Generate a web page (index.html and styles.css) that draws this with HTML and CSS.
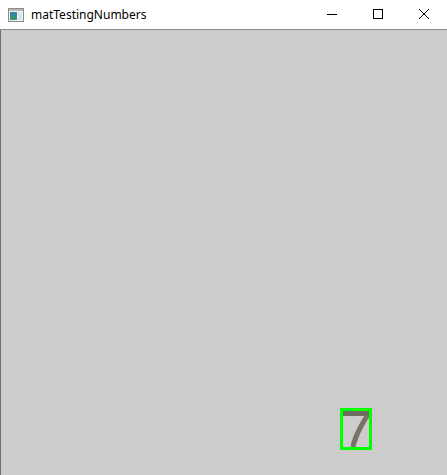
FILE: index.html
```html
<!DOCTYPE html>
<html>
<head>
<meta charset="utf-8">
<link rel="stylesheet" href="styles.css">
</head>
<body>
<div class="window">
  <div class="titlebar">
    <svg class="appicon" width="16" height="14" viewBox="0 0 16 14">
      <rect x="0.5" y="0.5" width="15" height="13" fill="#f4f4f4" stroke="#8a8a8a"/>
      <rect x="1" y="1" width="14" height="2" fill="#b8b8b8"/>
      <defs><linearGradient id="g" x1="0" y1="0" x2="0" y2="1"><stop offset="0" stop-color="#2f7fb0"/><stop offset="1" stop-color="#3c9a6a"/></linearGradient></defs>
      <rect x="2" y="4" width="7" height="8" fill="url(#g)"/>
      <rect x="10" y="4" width="4" height="8" fill="#d8e4ea"/>
    </svg>
    <span class="title">matTestingNumbers</span>
    <div class="controls">
      <svg class="btn" width="46" height="29" viewBox="0 0 46 29"><line x1="18" y1="14.5" x2="28" y2="14.5" stroke="#000" stroke-width="1"/></svg>
      <svg class="btn" width="46" height="29" viewBox="0 0 46 29"><rect x="18.5" y="9.5" width="9" height="9" fill="none" stroke="#000" stroke-width="1"/></svg>
      <svg class="btn" width="46" height="29" viewBox="0 0 46 29"><path d="M18 9 L28 19 M28 9 L18 19" stroke="#000" stroke-width="1"/></svg>
    </div>
  </div>
  <div class="canvas">
    <div class="detection">
      <svg class="digit" width="26" height="36" viewBox="0 0 26 36">
        <path d="M0 2.5 L26 2.5" stroke="#6f6a62" stroke-width="5" fill="none"/>
        <path d="M24.5 4 C20.5 11 16 18 13 26 S10.5 33 10 36" stroke="#77716a" stroke-width="5" fill="none"/>
      </svg>
    </div>
  </div>
</div>
</body>
</html>
```
FILE: styles.css
```css
html, body {
  margin: 0;
  padding: 0;
}
body {
  width: 447px;
  height: 475px;
  overflow: hidden;
  font-family: "Noto Sans", "Open Sans", "Liberation Sans", sans-serif;
}
.window {
  display: flex;
  flex-direction: column;
  width: 447px;
  height: 475px;
}
.titlebar {
  height: 29px;
  flex: none;
  background: #ffffff;
  border-bottom: 1px solid #8c8c8c;
  display: flex;
  align-items: center;
}
.appicon {
  margin-left: 8px;
}
.title {
  margin-left: 7px;
  font-size: 12px;
  color: #000;
  line-height: 29px;
  margin-top: -1px;
}
.controls {
  margin-left: auto;
  display: flex;
  align-self: stretch;
}
.btn {
  display: block;
}
.canvas {
  flex: 1;
  position: relative;
  background: #cccccc;
  border-left: 1px solid #6f6f6f;
}
.detection {
  position: absolute;
  left: 339px;
  top: 378px;
  width: 26px;
  height: 36px;
  border: 3px solid #00ff00;
}
.digit {
  display: block;
}
```
